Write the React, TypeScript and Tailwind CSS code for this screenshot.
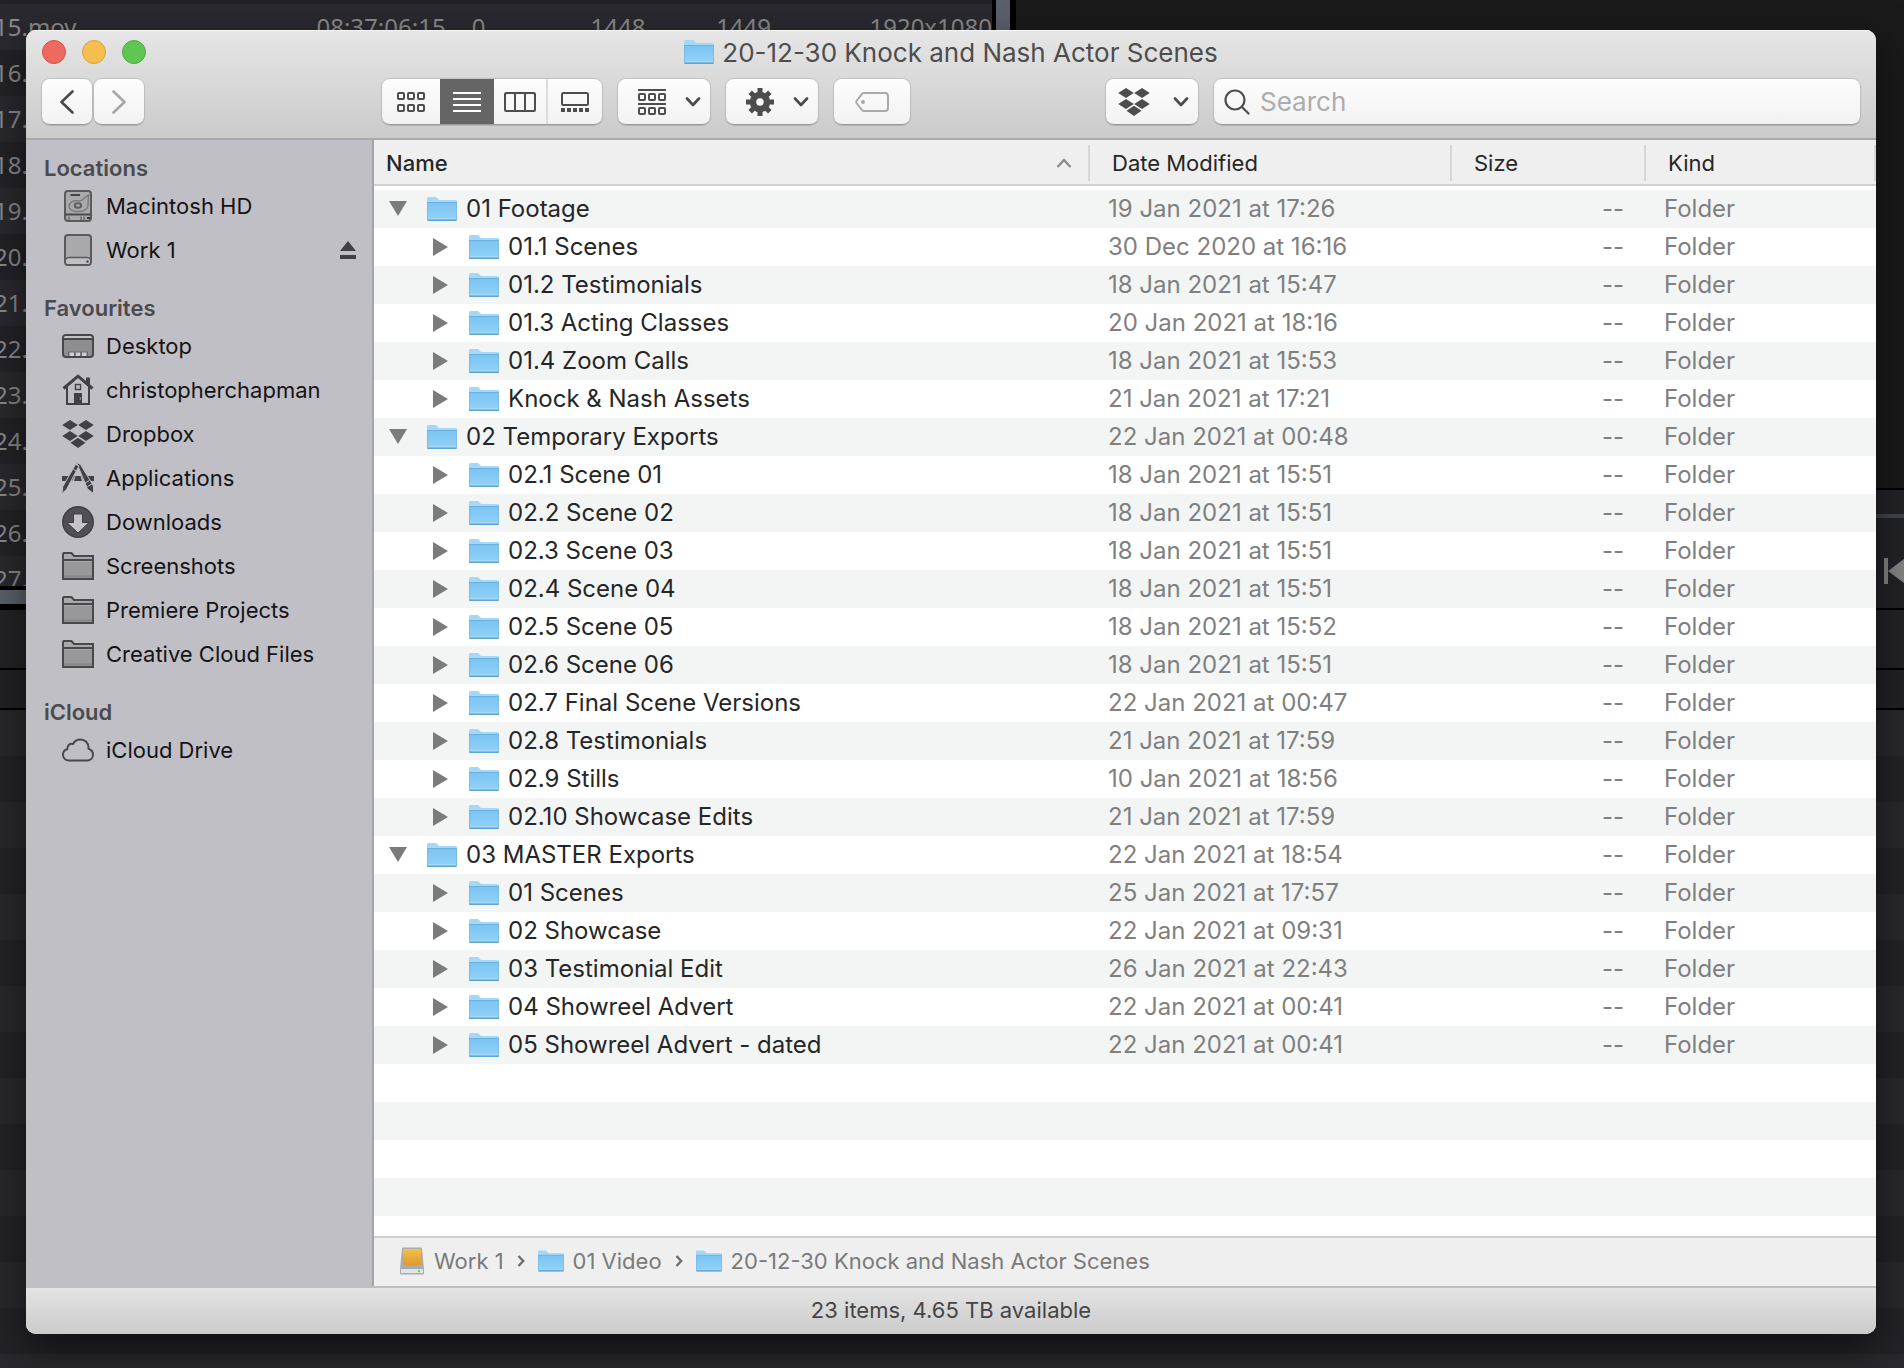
import type { ReactNode } from "react";

type Entry = { name: string; date: string; depth: 0 | 1 };

const entries: Entry[] = [
  { name: "01 Footage", date: "19 Jan 2021 at 17:26", depth: 0 },
  { name: "01.1 Scenes", date: "30 Dec 2020 at 16:16", depth: 1 },
  { name: "01.2 Testimonials", date: "18 Jan 2021 at 15:47", depth: 1 },
  { name: "01.3 Acting Classes", date: "20 Jan 2021 at 18:16", depth: 1 },
  { name: "01.4 Zoom Calls", date: "18 Jan 2021 at 15:53", depth: 1 },
  { name: "Knock & Nash Assets", date: "21 Jan 2021 at 17:21", depth: 1 },
  { name: "02 Temporary Exports", date: "22 Jan 2021 at 00:48", depth: 0 },
  { name: "02.1 Scene 01", date: "18 Jan 2021 at 15:51", depth: 1 },
  { name: "02.2 Scene 02", date: "18 Jan 2021 at 15:51", depth: 1 },
  { name: "02.3 Scene 03", date: "18 Jan 2021 at 15:51", depth: 1 },
  { name: "02.4 Scene 04", date: "18 Jan 2021 at 15:51", depth: 1 },
  { name: "02.5 Scene 05", date: "18 Jan 2021 at 15:52", depth: 1 },
  { name: "02.6 Scene 06", date: "18 Jan 2021 at 15:51", depth: 1 },
  { name: "02.7 Final Scene Versions", date: "22 Jan 2021 at 00:47", depth: 1 },
  { name: "02.8 Testimonials", date: "21 Jan 2021 at 17:59", depth: 1 },
  { name: "02.9 Stills", date: "10 Jan 2021 at 18:56", depth: 1 },
  { name: "02.10 Showcase Edits", date: "21 Jan 2021 at 17:59", depth: 1 },
  { name: "03 MASTER Exports", date: "22 Jan 2021 at 18:54", depth: 0 },
  { name: "01 Scenes", date: "25 Jan 2021 at 17:57", depth: 1 },
  { name: "02 Showcase", date: "22 Jan 2021 at 09:31", depth: 1 },
  { name: "03 Testimonial Edit", date: "26 Jan 2021 at 22:43", depth: 1 },
  { name: "04 Showreel Advert", date: "22 Jan 2021 at 00:41", depth: 1 },
  { name: "05 Showreel Advert - dated", date: "22 Jan 2021 at 00:41", depth: 1 },
];

function FolderIcon({ className }: { className: string }) {
  return (
    <svg viewBox="0 0 30 24" className={className} aria-hidden="true">
      <defs>
        <linearGradient id="folder-front" x1="0" y1="0" x2="0" y2="1">
          <stop offset="0" stopColor="#7cc4f2" />
          <stop offset="1" stopColor="#92d2f9" />
        </linearGradient>
      </defs>
      <path d="M0 1.500Q0 0 1.500 0H8.500Q9.500 0 10.200 .9L11.500 2.500Q12 3 13 3H28.500Q30 3 30 4.500V22.500Q30 24 28.500 24H1.500Q0 24 0 22.500Z" fill="#a3d8f8" />
      <path d="M0 5.500H30V22.500Q30 24 28.500 24H1.500Q0 24 0 22.500Z" fill="url(#folder-front)" />
      <path d="M0 5.500H30" stroke="#6cb0dd" />
      <path d="M.5 23.300H29.500" stroke="#5fa2cd" strokeWidth="1.400" />
      <path d="M1 21.500H29" stroke="#a8dcfa" strokeWidth=".8" />
      <path d="M29.600 4.500V23M.4 6V23" stroke="#74b8e2" strokeWidth=".8" />
    </svg>
  );
}

function DropboxIcon() {
  return (
    <svg viewBox="0 0 32 30" className="h-[30px] w-8" fill="currentColor" aria-hidden="true">
      <path d="M8 1L15.800 6L8 11L.2 6ZM24 1L31.800 6L24 11L16.200 6ZM8 12L15.800 17L8 22L.2 17ZM24 12L31.800 17L24 22L16.200 17ZM16 18.800L23.500 23.800L16 29L8.500 23.800Z" />
    </svg>
  );
}

function ChevronDown() {
  return (
    <svg viewBox="0 0 16 10" className="h-[10px] w-4" fill="none" stroke="#4a4a4a" strokeWidth="2.600" strokeLinecap="round" strokeLinejoin="round" aria-hidden="true">
      <path d="M2 1.500L8 8L14 1.500" />
    </svg>
  );
}

function PathChevron() {
  return (
    <svg viewBox="0 0 8 12" className="h-3 w-2" fill="none" stroke="#6e6e6e" strokeWidth="2.400" aria-hidden="true">
      <path d="M1.500 1L6.200 6L1.500 11" />
    </svg>
  );
}

function SideFolderIcon() {
  return (
    <svg viewBox="0 0 32 32" className="size-8" fill="none" stroke="#48474c" strokeWidth="2" aria-hidden="true">
      <path d="M1 29V4Q1 3 2 3H9.500L12 6H31V29Z" fill="#a9a8ad" />
      <path d="M2 12H30V28H2Z" fill="#98979c" stroke="none" />
      <path d="M2 26.500H30" stroke="#87868b" />
      <path d="M1 10H31" />
    </svg>
  );
}

const sideIcons: Record<string, ReactNode> = {
  hd: (
    <svg viewBox="0 0 32 32" className="size-8" fill="none" stroke="#5a595e" strokeWidth="2" aria-hidden="true">
      <rect x="3" y="1" width="26" height="30" rx="3" fill="#a9a8ad" />
      <path d="M8.500 5H18" stroke="#454449" />
      <path d="M26.500 5L18.500 11C11 10 7 12.500 7 16C7 19.500 11 21.500 16 21.500C22 21.500 26 19 26 15Z" stroke="#7c7b80" strokeWidth="1.500" />
      <ellipse cx="16" cy="15.500" rx="3.200" ry="2.300" stroke="#5f5e63" />
      <path d="M3 24.500H29" stroke="#4b4a4f" />
      <path d="M7 26.500V30M19 26.500V30M22 26.500V30" stroke="#6b6a6f" strokeWidth="1.500" />
      <path d="M25 28H28" stroke="#333" />
    </svg>
  ),
  drive: (
    <svg viewBox="0 0 32 32" className="size-8" fill="none" stroke="#5a595e" strokeWidth="2" aria-hidden="true">
      <rect x="3" y="1" width="26" height="30" rx="3" fill="#a9a8ad" />
      <path d="M4 26Q4 24 6 24H26Q28 24 28 26V28Q28 30 26 30H6Q4 30 4 28Z" fill="#c0bfc4" stroke="none" />
      <path d="M4 25Q5 23.500 7 23.500H25Q27 23.500 28 25" strokeWidth="1.600" />
      <path d="M24.500 27.500H26.500" stroke="#333" />
    </svg>
  ),
  desktop: (
    <svg viewBox="0 0 32 32" className="size-8" fill="none" stroke="#48474c" strokeWidth="2" aria-hidden="true">
      <rect x="1" y="5" width="30" height="22" rx="3" fill="#8e8d92" />
      <path d="M2 8Q2 6 4 6H28Q30 6 30 8Z" fill="#c4c3c8" stroke="none" />
      <path d="M1 9H31" />
      <path d="M6 26V21.500H26V26Z" fill="#6a696e" stroke="none" />
      <path d="M7.500 22.500H12V26H7.500ZM13.800 22.500H18.200V26H13.800ZM20 22.500H24.500V26H20Z" fill="#cfced3" stroke="none" />
      <path d="M3 27H29" strokeWidth="1.600" />
    </svg>
  ),
  home: (
    <svg viewBox="0 0 32 32" className="size-8" fill="none" stroke="#414046" strokeWidth="2" aria-hidden="true">
      <path d="M1.500 14.500L16 2.200L30.500 14.500" strokeWidth="3" />
      <path d="M5 13V30H27V13" />
      <path d="M24 3.500H28V12.500L24 9Z" fill="#414046" stroke="none" />
      <rect x="13.500" y="10.500" width="5" height="5" strokeWidth="1.400" />
      <path d="M12 19H20V30H12Z" fill="#414046" stroke="none" />
      <path d="M18.300 23.500V25.500" stroke="#c0bfc4" strokeWidth="1" />
    </svg>
  ),
  dropbox: <DropboxIcon />,
  apps: (
    <svg viewBox="0 0 32 32" className="size-8" fill="#414046" stroke="#c0bfc4" aria-hidden="true">
      <path d="M0 14H32V19H0Z" stroke="none" />
      <path d="M9 21L16 8L23 21Z" fill="#c0bfc4" stroke="none" />
      <path d="M12 19L13.500 14H18.500L20 19Z" stroke="none" />
      <path d="M14.500 .5L18.500 2.500L31.500 24V31.500L25.500 27Z" strokeWidth="1" />
      <path d="M17 4L13.500 2.500L.8 24.500L0 31.500L4.500 27.500Z" strokeWidth="1" />
      <path d="M11.500 7.500L16 10M23 21L27.500 18.500M25.500 24.500L30 22" strokeWidth="1" fill="none" />
    </svg>
  ),
  downloads: (
    <svg viewBox="0 0 32 32" className="size-8" aria-hidden="true">
      <circle cx="16" cy="16" r="15.200" fill="#514f55" stroke="#3f3e43" strokeWidth="1.500" />
      <path d="M11.500 8H20.500V16.500H27L16 27L5 16.500H11.500Z" fill="#c4c3c8" stroke="#3f3e43" />
    </svg>
  ),
  folder: <SideFolderIcon />,
  cloud: (
    <svg viewBox="0 0 32 32" className="size-8" fill="none" stroke="#48474c" strokeWidth="2" strokeLinejoin="round" aria-hidden="true">
      <path d="M7 26.500C3.500 26.500 1 24 1 20.800C1 18 2.800 15.800 5.300 15.200C5 11.500 7.500 9.300 11 10C12.500 7 15.500 5.500 18.500 5.500C23 5.500 26.500 9 26.500 13.500V14.800C29.200 15.800 31 18 31 20.500C31 24 28.500 26.500 25 26.500Z" />
    </svg>
  ),
};

const sections = [
  {
    title: "Locations",
    items: [
      { label: "Macintosh HD", icon: "hd" },
      { label: "Work 1", icon: "drive", eject: true },
    ],
  },
  {
    title: "Favourites",
    items: [
      { label: "Desktop", icon: "desktop" },
      { label: "christopherchapman", icon: "home" },
      { label: "Dropbox", icon: "dropbox" },
      { label: "Applications", icon: "apps" },
      { label: "Downloads", icon: "downloads" },
      { label: "Screenshots", icon: "folder" },
      { label: "Premiere Projects", icon: "folder" },
      { label: "Creative Cloud Files", icon: "folder" },
    ],
  },
  { title: "iCloud", items: [{ label: "iCloud Drive", icon: "cloud" }] },
];

const clips = ["16.", "17.", "18.", "19.", "20.", "21.", "22.", "23.", "24.", "25.", "26.", "27."];

// The video editor that sits behind the Finder window
function EditorBackdrop() {
  return (
    <div className="absolute inset-0 flex flex-col overflow-hidden bg-[#28272d] font-['Noto_Sans',sans-serif] text-2xl text-[#8a8a8a]" aria-hidden="true">
      <div className="flex h-[608px] shrink-0">
        <div className="flex w-[992px] shrink-0 flex-col overflow-hidden">
          <div className="h-1 shrink-0 bg-[#222126]" />
          <div className="flex h-[46px] shrink-0 items-center whitespace-nowrap bg-[#2a292f]">
            <span className="-ml-[6px] w-[326px]">15.mov</span>
            <span className="w-[157px]">08:37:06:15</span>
            <span className="w-[120px]">0</span>
            <span className="w-[127px]">1448</span>
            <span className="w-[155px]">1449</span>
            <span>1920x1080</span>
          </div>
          {clips.map((clip) => (
            <div key={clip} className="flex h-[46px] shrink-0 items-center odd:bg-[#232228] even:bg-[#2a292f]">
              <span className="-ml-[6px]">{clip}</span>
            </div>
          ))}
        </div>
        <div className="w-6 border-r-[6px] border-l-4 border-black bg-[#5b616c]" />
        <div className="flex flex-1 flex-col bg-[#1a1a1a]">
          <div className="h-[490px] shrink-0 border-b-2 border-black" />
          <div className="flex flex-1 flex-col items-end bg-[#232228]">
            <div className="mt-6 h-1 w-full bg-[#42474d]" />
            <svg viewBox="0 0 20 26" className="mt-10 h-[26px] w-5" fill="#858585">
              <path d="M0 0H4V26H0ZM20 1V25L4 13Z" />
            </svg>
          </div>
        </div>
      </div>
      <div className="-mt-[22px] h-[22px] w-[992px] shrink-0 border-y-4 border-black bg-[#5b616c]" />
      <div className="h-[62px] shrink-0 border-y-2 border-black bg-[#232228]" />
      <div className="h-10 shrink-0 border-b-2 border-black bg-[#222127]" />
      {Array.from({ length: 15 }).map((_, index) => (
        <div key={index} className="h-[46px] shrink-0 odd:bg-[#29282e] even:bg-[#232228]" />
      ))}
    </div>
  );
}

const buttonClass =
  "flex h-[46px] items-center border-b border-[#9a9a9a] bg-linear-to-b from-[#fdfdfd] to-[#f2f2f2] shadow-[0_0_1px_1px_rgba(0,0,0,0.12)]";

function Toolbar() {
  return (
    <header className="border-b-2 border-[#a9a9a9] bg-linear-to-b from-[#e6e6e6] to-[#cbcbcb] px-4 pb-[13px] shadow-[inset_0_1px_0_#f6f6f6]">
      <div className="grid h-[49px] grid-cols-[1fr_auto_1fr] items-center pb-[5px]">
        <div className="flex gap-4">
          <button aria-label="Close" className="size-6 rounded-full border border-[#d65046] bg-[#ed6a5e]" />
          <button aria-label="Minimise" className="size-6 rounded-full border border-[#d8a040] bg-[#f5bf4f]" />
          <button aria-label="Zoom" className="size-6 rounded-full border border-[#51a73e] bg-[#61c554]" />
        </div>
        <h1 className="flex items-center gap-2 text-[26px] text-[#4d4d4d]">
          <FolderIcon className="h-6 w-[30px]" />
          20-12-30 Knock and Nash Actor Scenes
        </h1>
      </div>

      <div className="flex items-center gap-4">
        <div className="mr-[222px] flex gap-[2px]">
          <button aria-label="Back" className={`${buttonClass} w-[50px] justify-center rounded-lg`}>
            <svg viewBox="0 0 14 24" className="h-6 w-[14px]" fill="none" stroke="#4a4a4a" strokeWidth="2.600" strokeLinecap="round" strokeLinejoin="round">
              <path d="M12.500 1.500L1.500 12L12.500 22.500" />
            </svg>
          </button>
          <button aria-label="Forward" className={`${buttonClass} w-[50px] justify-center rounded-lg`}>
            <svg viewBox="0 0 14 24" className="h-6 w-[14px]" fill="none" stroke="#a6a6a6" strokeWidth="2.600" strokeLinecap="round" strokeLinejoin="round">
              <path d="M1.500 1.500L12.500 12L1.500 22.500" />
            </svg>
          </button>
        </div>

        <div className={`${buttonClass} w-[220px] overflow-hidden rounded-lg`}>
          <button aria-label="Icon view" className="flex h-full w-[58px] items-center justify-center">
            <svg viewBox="0 0 28 20" className="h-5 w-7" fill="none" stroke="#4d4d4d" strokeWidth="2">
              <rect x="1" y="1" width="6" height="6" rx="1" />
              <rect x="11" y="1" width="6" height="6" rx="1" />
              <rect x="21" y="1" width="6" height="6" rx="1" />
              <rect x="1" y="13" width="6" height="6" rx="1" />
              <rect x="11" y="13" width="6" height="6" rx="1" />
              <rect x="21" y="13" width="6" height="6" rx="1" />
            </svg>
          </button>
          <button aria-label="List view" aria-pressed="true" className="flex h-[46px] w-[54px] items-center justify-center bg-[#656565]">
            <svg viewBox="0 0 28 20" className="h-5 w-7" stroke="#fff" strokeWidth="2">
              <path d="M0 1H28M0 7H28M0 13H28M0 19H28" />
            </svg>
          </button>
          <button aria-label="Column view" className="flex h-full w-[54px] items-center justify-center border-r-2 border-[#dcdcdc]">
            <svg viewBox="0 0 32 20" className="h-5 w-8" fill="none" stroke="#4d4d4d" strokeWidth="2">
              <rect x="1" y="1" width="30" height="18" rx="1.500" />
              <path d="M11 1V19M21 1V19" />
            </svg>
          </button>
          <button aria-label="Gallery view" className="flex h-full flex-1 items-center justify-center">
            <svg viewBox="0 0 28 20" className="h-5 w-7" fill="none" stroke="#4d4d4d" strokeWidth="2">
              <rect x="1" y="1" width="26" height="12" rx="1.500" />
              <path d="M0 18H28" strokeWidth="4" strokeDasharray="4 2" />
            </svg>
          </button>
        </div>

        <button aria-label="Group items" className={`${buttonClass} w-[92px] justify-between rounded-lg pr-[9px] pl-5`}>
          <svg viewBox="0 0 28 28" className="size-7" fill="none" stroke="#4d4d4d" strokeWidth="2">
            <path d="M0 2H28M0 16H28" />
            <rect x="1" y="6" width="6" height="6" rx="1" />
            <rect x="11" y="6" width="6" height="6" rx="1" />
            <rect x="21" y="6" width="6" height="6" rx="1" />
            <rect x="1" y="20" width="6" height="6" rx="1" />
            <rect x="11" y="20" width="6" height="6" rx="1" />
            <rect x="21" y="20" width="6" height="6" rx="1" />
          </svg>
          <ChevronDown />
        </button>

        <button aria-label="Action" className={`${buttonClass} w-[92px] justify-between rounded-lg pr-[9px] pl-5`}>
          <svg viewBox="-14 -14 28 28" className="size-7" fill="none" stroke="#4d4d4d">
            <circle r="7" strokeWidth="6.500" />
            <path d="M0-14V-9M0 9V14M-14 0H-9M9 0H14" strokeWidth="5" />
            <path d="M-9.800-9.800L-6-6M6 6L9.800 9.800M-9.800 9.800L-6 6M6-6L9.800-9.800" strokeWidth="5" />
          </svg>
          <ChevronDown />
        </button>

        <button aria-label="Edit tags" className={`${buttonClass} mr-[180px] w-[76px] justify-center rounded-lg`}>
          <svg viewBox="0 0 34 20" className="h-5 w-[34px]" fill="none" stroke="#a9a9a9" strokeWidth="2">
            <path d="M9 1H30Q33 1 33 4V16Q33 19 30 19H9Q8 19 7 18L1.500 11Q1 10 1.500 9L7 2Q8 1 9 1Z" />
            <circle cx="8" cy="10" r="2" fill="#a9a9a9" stroke="none" />
          </svg>
        </button>

        <button aria-label="Dropbox" className={`${buttonClass} w-[92px] justify-between rounded-lg pr-[9px] pl-3 text-[#4d4d4d]`}>
          <DropboxIcon />
          <ChevronDown />
        </button>

        <label className={`${buttonClass} flex-1 gap-[10px] rounded-lg pl-[10px]`}>
          <svg viewBox="0 0 26 26" className="size-[26px]" fill="none" stroke="#4d4d4d" strokeWidth="2.200" strokeLinecap="round">
            <circle cx="11" cy="11" r="9.500" />
            <path d="M18 18L24.500 24.500" />
          </svg>
          <input type="search" aria-label="Search" placeholder="Search" className="min-w-0 flex-1 bg-transparent text-[26px] outline-none placeholder:text-[#acacac]" />
        </label>
      </div>
    </header>
  );
}

function Sidebar() {
  return (
    <nav className="flex w-[348px] shrink-0 flex-col gap-5 border-r-2 border-[#a5a4a9] bg-[#c0bfc5] pt-3 text-[22px]">
      {sections.map((section) => (
        <section key={section.title}>
          <h2 className="flex h-8 items-center pl-[18px] font-semibold text-[#4b4a4f]">{section.title}</h2>
          <ul>
            {section.items.map((item) => (
              <li key={item.label} className="flex h-11 items-center justify-between pr-4 pl-9">
                <a href="#" className="flex items-center gap-3 text-[#141416]">
                  <span className="flex size-8 items-center justify-center text-[#414046]">{sideIcons[item.icon]}</span>
                  {item.label}
                </a>
                {"eject" in item && (
                  <button aria-label="Eject">
                    <svg viewBox="0 0 16 18" className="h-[18px] w-4" fill="#414046">
                      <path d="M8 0L16 10H0ZM0 14H16V18H0Z" />
                    </svg>
                  </button>
                )}
              </li>
            ))}
          </ul>
        </section>
      ))}
    </nav>
  );
}

function FileTable() {
  return (
    <table className="w-full table-fixed text-left">
      <colgroup>
        <col />
        <col className="w-[362px]" />
        <col className="w-[194px]" />
        <col className="w-[230px]" />
      </colgroup>
      <thead className="text-[22px] text-[#262626]">
        <tr className="h-[46px] bg-[#efefef] shadow-[inset_0_-2px_0_#d0d0d0]">
          <th className="p-0 font-medium" aria-sort="ascending">
            <div className="flex h-9 items-center justify-between border-r-2 border-[#d6d6d6] pr-4 pl-3">
              Name
              <svg viewBox="0 0 16 10" className="h-[10px] w-4" fill="none" stroke="#8c8c8c" strokeWidth="2.400">
                <path d="M1.500 9L8 2L14.500 9" />
              </svg>
            </div>
          </th>
          <th className="p-0 font-normal">
            <div className="flex h-9 items-center border-r-2 border-[#d6d6d6] pl-[22px]">Date Modified</div>
          </th>
          <th className="p-0 font-normal">
            <div className="flex h-9 items-center border-r-2 border-[#d6d6d6] pl-[22px]">Size</div>
          </th>
          <th className="p-0 font-normal">
            <div className="flex h-9 items-center border-r-2 border-[#d6d6d6] pl-[22px]">Kind</div>
          </th>
        </tr>
      </thead>
      <tbody className="text-2xl text-[#7f7f7f]">
        <tr className="h-1" />
        {entries.map((entry) => (
          <tr key={entry.name} className="h-[38px] even:bg-[#f3f5f5]">
            <td className="p-0">
              <div className={`flex items-center ${entry.depth === 0 ? "pl-[15px]" : "pl-[57px]"}`}>
                <button className="mr-5 flex w-[18px] justify-center" aria-label={entry.name} aria-expanded={entry.depth === 0}>
                  <svg viewBox="0 0 18 18" className="size-[18px]" fill="#7b7b7b">
                    {entry.depth === 0 ? <path d="M0 1H18L9 16Z" /> : <path d="M2 0L17 9L2 18Z" />}
                  </svg>
                </button>
                <FolderIcon className="h-6 w-[30px]" />
                <span className="ml-[9px] whitespace-nowrap text-[#262626]">{entry.name}</span>
              </div>
            </td>
            <td className="p-0 pl-[18px] whitespace-nowrap">{entry.date}</td>
            <td className="p-0 pr-[22px] text-right">--</td>
            <td className="p-0 pl-[18px]">Folder</td>
          </tr>
        ))}
        {Array.from({ length: 4 }).map((_, index) => (
          <tr key={index} className="h-[38px] even:bg-[#f3f5f5]">
            <td colSpan={4} className="p-0" />
          </tr>
        ))}
      </tbody>
    </table>
  );
}

function PathBar() {
  return (
    <div className="flex h-[50px] items-center gap-[13px] border-t-2 border-[#cfcfcf] bg-[#efefef] pb-[2px] pl-[26px] text-[22px] text-[#7a7a7a]">
      <span className="flex items-center gap-[10px]">
        <svg viewBox="0 0 24 28" className="h-7 w-6" aria-hidden="true">
          <defs>
            <linearGradient id="drive-top" x1="0" y1="0" x2="0" y2="1">
              <stop offset="0" stopColor="#f5c147" />
              <stop offset="1" stopColor="#dd9a33" />
            </linearGradient>
          </defs>
          <path d="M2 1.500Q2 .5 3 .5H21Q22 .5 22 1.500L24 22V26Q24 27.500 22.500 27.500H1.500Q0 27.500 0 26V22Z" fill="#a9abad" />
          <path d="M3 2H21V18H3Z" fill="url(#drive-top)" />
          <path d="M1 22H23V26H1Z" fill="#dfe6e6" />
          <circle cx="19" cy="24" r="1.200" fill="#7fc77a" />
        </svg>
        Work 1
      </span>
      <PathChevron />
      <span className="flex items-center gap-[9px]">
        <FolderIcon className="h-[22px] w-[26px]" />
        01 Video
      </span>
      <PathChevron />
      <span className="flex items-center gap-[9px]">
        <FolderIcon className="h-[22px] w-[26px]" />
        20-12-30 Knock and Nash Actor Scenes
      </span>
    </div>
  );
}

export default function App() {
  return (
    <div className="relative flex min-h-screen flex-col pt-[30px] pr-7 pb-[34px] pl-[26px] font-[Inter,sans-serif]">
      <EditorBackdrop />
      <main className="relative flex flex-1 flex-col overflow-hidden rounded-[10px] bg-white shadow-[0_16px_44px_rgba(0,0,0,0.55)]">
        <Toolbar />
        <div className="flex flex-1">
          <Sidebar />
          <div className="flex min-w-0 flex-1 flex-col justify-between">
            <FileTable />
            <PathBar />
          </div>
        </div>
        <footer className="flex h-12 items-center justify-center border-t-2 border-[#bfbfbf] bg-linear-to-b from-[#e4e4e4] to-[#cbcbcb] pb-[2px] text-[22px] text-[#454545]">
          23 items, 4.65 TB available
        </footer>
      </main>
    </div>
  );
}
